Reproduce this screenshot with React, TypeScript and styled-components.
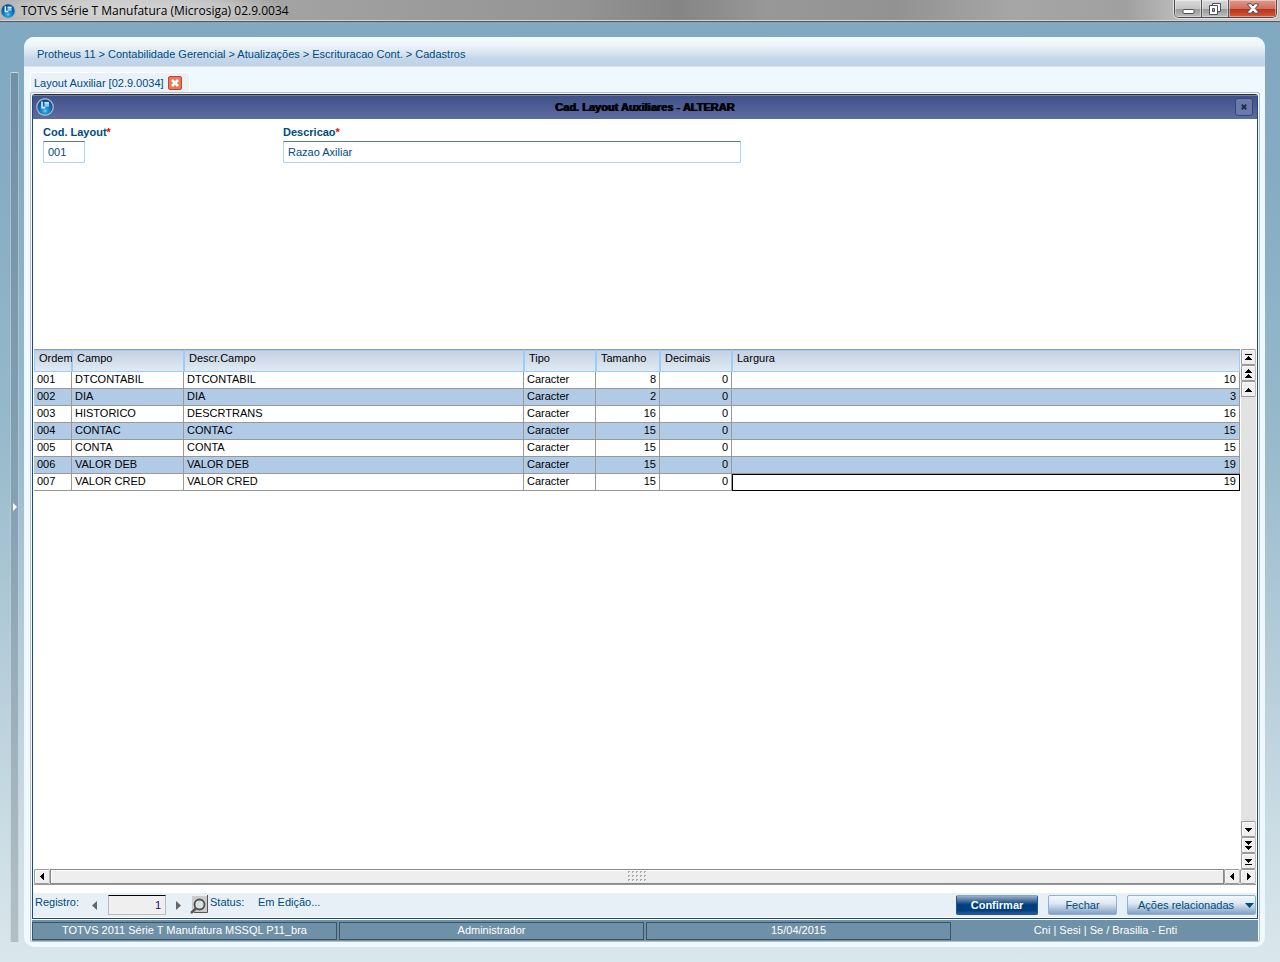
import React from "react";
import styled, { createGlobalStyle, css } from "styled-components";

const GlobalStyle = createGlobalStyle`
  *, *::before, *::after { box-sizing: border-box; }
  body {
    margin: 0;
    font-family: "Liberation Sans", Arial, sans-serif;
    font-size: 11px;
    line-height: 14px;
    color: #004b7f;
  }
  button, input { font: inherit; color: inherit; margin: 0; border-radius: 0; }
  button { padding: 0; cursor: pointer; }
`;

const Page = styled.div`
  min-height: 100vh;
  display: flex;
  flex-direction: column;
  background: linear-gradient(#80a8c0 0%, #84abc3 16%, #97b9cb 45%, #cfdfe6 90%, #dae7ec 100%);
`;

const AppBar = styled.header`
  display: flex;
  align-items: center;
  height: 22px;
  padding: 0 3px 0 0;
  border-bottom: 1px solid #4b5660;
  box-shadow: inset 0 -1px #d6d6d6;
  background:
    radial-gradient(ellipse 150px 22px at 140px 11px, rgba(255, 255, 255, 0.5), rgba(255, 255, 255, 0.35) 60%, transparent),
    linear-gradient(90deg, #b4b4b4 0%, #a0a0a0 26%, #949494 45%, #858585 53%, #989898 60%, #929292 70%, #a6a6a6 79%, #a0a0a0 88%, #c8c8c8 94%, #c4c4c4 100%);
`;

const AppTitle = styled.h1`
  flex: 1;
  margin: 0 0 0 5px;
  font: 400 12px/20px "Open Sans", sans-serif;
  color: #000;
`;

const WindowControls = styled.div`
  display: flex;
  align-self: flex-start;
  height: 18px;
  border: 1px solid #4a4a52;
  border-top: 0;
  border-radius: 0 0 5px 5px;
  box-shadow: 0 0 0 1px #e2e2e2;
  overflow: hidden;
`;

const WindowButton = styled.button<{ $close?: boolean }>`
  display: flex;
  align-items: center;
  justify-content: center;
  width: ${(p) => (p.$close ? 47 : 27)}px;
  border: 0;
  border-right: ${(p) => (p.$close ? "0" : "1px solid #55555c")};
  box-shadow: inset 0 0 0 1px rgba(255, 255, 255, 0.4);
  background: ${(p) =>
    p.$close
      ? "linear-gradient(#dd9d90 0%, #cf6f5c 50%, #b52f17 51%, #d65a38 100%)"
      : "linear-gradient(#dadada 0%, #c4c4c4 50%, #989898 51%, #bcbcbc 100%)"};
`;

const Workspace = styled.div`
  flex: 1;
  display: flex;
  gap: 5px;
  padding: 15px 15px 15px 10px;
`;

const Rail = styled.button`
  width: 9px;
  margin: 35px 0 5px;
  border: 1px solid rgba(255, 255, 255, 0.4);
  border-radius: 2px;
  background: linear-gradient(#6f91a8, #85a2b3 50%, #b3bfc6);
  color: #fff;
  display: flex;
  align-items: center;
  justify-content: center;
`;

const Panel = styled.main`
  flex: 1;
  min-width: 0;
  display: flex;
  flex-direction: column;
  border-radius: 10px;
  overflow: hidden;
  background: #eff7ff;
`;

const Breadcrumb = styled.nav`
  height: 30px;
  padding: 10px 13px 0;
  border-bottom: 1px solid #d5e2ef;
  background: linear-gradient(#f4f9fc 0%, #eef5f9 30%, #c4d6e8 75%, #c0d3e7 100%);
`;

const TabStrip = styled.div`
  display: flex;
  padding: 5px 5px 0 6px;
`;

const Tab = styled.div`
  display: flex;
  align-items: center;
  gap: 4px;
  height: 20px;
  padding: 0 7px 0 3px;
  border: 1px solid #fff;
  border-bottom: 0;
  border-radius: 3px 3px 0 0;
  background: #eaf1f7;
`;

const TabClose = styled.button`
  display: flex;
  align-items: center;
  justify-content: center;
  width: 14px;
  height: 14px;
  border: 1px solid #d63c23;
  border-radius: 2px;
  background: #d9805e;
`;

const Frame = styled.div`
  flex: 1;
  display: flex;
  flex-direction: column;
  margin: 0 5px 5px 6px;
  padding: 1px 1px 0;
  border: 1px solid #b9bec3;
  border-radius: 2px;
`;

const Dialog = styled.section`
  flex: 1;
  display: flex;
  flex-direction: column;
  border: 1px solid #1a4b7c;
  border-top-color: #2c2c36;
  border-radius: 3px 3px 0 0;
  background: #fff;
`;

const DialogBar = styled.div`
  display: flex;
  align-items: center;
  justify-content: space-between;
  height: 24px;
  padding: 0 4px 2px 3px;
  border-top: 1px solid #71809d;
  background: linear-gradient(#40508a, #5d6ca0);
`;

const DialogTitle = styled.h2`
  margin: 0;
  font-size: 11px;
  line-height: 20px;
  color: #000;
  text-shadow: 1px 0 #000;
`;

const DialogClose = styled.button`
  display: flex;
  align-items: center;
  justify-content: center;
  width: 18px;
  height: 18px;
  border: 1px solid #34467c;
  border-radius: 3px;
  background: #6a7aaa;
`;

const Form = styled.form`
  display: flex;
  min-height: 230px;
  padding: 6px 10px 0;
`;

const Field = styled.div<{ $wide?: boolean }>`
  display: flex;
  flex-direction: column;
  gap: 2px;
  width: ${(p) => (p.$wide ? 458 : 240)}px;
`;

const FieldLabel = styled.label`
  font-weight: 700;
`;

const Required = styled.span`
  color: #f00;
`;

const TextBox = styled.input<{ $short?: boolean }>`
  width: ${(p) => (p.$short ? "42px" : "100%")};
  height: 22px;
  padding: 0 4px;
  border: 1px solid #aed6fb;
  border-top-color: #5a7aa0;
  background: #fff;
`;

const GridArea = styled.div`
  flex: 1;
  display: flex;
  gap: 1px;
  padding: 0 1px;
`;

const TableHolder = styled.div`
  flex: 1;
`;

const Table = styled.table`
  width: 100%;
  table-layout: fixed;
  border-collapse: separate;
  border-spacing: 0;
  color: #000;
`;

const HeadCell = styled.th`
  height: 23px;
  padding: 1px 0 0 4px;
  overflow: hidden;
  white-space: nowrap;
  vertical-align: top;
  text-align: left;
  font-weight: 400;
  border-top: 1px solid #999;
  border-bottom: 1px solid #9cf;
  border-left: 1px solid #9cf;
  box-shadow: inset 0 1px #9cf, inset -1px 0 #9cf;
  background: linear-gradient(#c4d0df, #e1eaf5);
`;

const Row = styled.tr`
  background: #fff;
  &:nth-child(even) { background: #b1cbe7; }
`;

const Cell = styled.td<{ $number?: boolean; $active?: boolean }>`
  height: 17px;
  padding: 0 3px 2px;
  border-right: 1px solid #999;
  border-bottom: 1px solid #999;
  text-align: ${(p) => (p.$number ? "right" : "left")};
  ${(p) =>
    p.$active &&
    css`
      border-right-color: #000;
      border-bottom-color: #000;
      box-shadow: inset 1px 1px #000;
    `}
`;

const VScroll = styled.div`
  display: flex;
  flex-direction: column;
  width: 15px;
  background: #e2e2e2;
`;

const ScrollGap = styled.div`
  flex: 1;
`;

const ScrollButton = styled.button`
  display: flex;
  align-items: center;
  justify-content: center;
  width: 100%;
  height: 16px;
  border: 1px solid #999;
  border-right-color: #bbb;
  border-radius: 2px;
  box-shadow: inset 1px 1px #fff;
  background: #eee;
  color: #000;
  svg { flex: none; }
`;

const HScroll = styled.div`
  display: flex;
  height: 16px;
  margin: 0 1px;
  border-bottom: 1px solid #999;
  ${ScrollButton} { width: 16px; height: 15px; }
`;

const ScrollThumb = styled.div`
  flex: 1;
  display: flex;
  align-items: center;
  justify-content: center;
  border: 1px solid #888;
  box-shadow: inset 1px 1px #fff;
  background: #eee;
`;

const Footer = styled.footer`
  display: flex;
  justify-content: space-between;
  height: 25px;
  margin-top: 8px;
  padding: 2px 1px 0 2px;
  border-bottom: 1px solid #fff;
  background: #e8f0f7;
`;

const RecordNav = styled.div`
  display: flex;
  align-items: flex-start;
`;

const FooterText = styled.span<{ $width?: number }>`
  width: ${(p) => (p.$width ? `${p.$width}px` : "auto")};
`;

const StepButton = styled.button`
  display: flex;
  align-items: center;
  justify-content: center;
  width: 17px;
  height: 20px;
  border: 0;
  background: none;
  color: #666;
`;

const RecordInput = styled.input`
  width: 58px;
  height: 20px;
  margin: 0 4px 0 5px;
  padding: 0 4px;
  border: 1px solid #bbb;
  border-top-color: #000;
  background: #efefef;
  color: #1a1060;
  text-align: right;
`;

const SearchButton = styled.button`
  width: 18px;
  height: 19px;
  margin: 0 2px 0 3px;
  border: 0;
  background: none;
`;

const Actions = styled.div`
  display: flex;
  gap: 10px;
`;

const ActionButton = styled.button<{ $primary?: boolean; $menu?: boolean; $width: number }>`
  display: flex;
  align-items: center;
  justify-content: ${(p) => (p.$menu ? "space-between" : "center")};
  width: ${(p) => p.$width}px;
  height: 20px;
  padding: ${(p) => (p.$menu ? "0 1px 0 10px" : "0")};
  border: 1px solid #8fafd3;
  border-radius: 2px;
  background: linear-gradient(#f2f8fe 0%, #dfe9f4 40%, #7f9fc4 100%);
  white-space: nowrap;
  ${(p) =>
    p.$primary &&
    css`
      border-color: #8aa3c2 #24548c #24548c;
      background: linear-gradient(#9db0c7 0%, #003f7f 48%, #003f7f 80%, #2a5e96 100%);
      color: #fff;
      font-weight: 700;
    `}
`;

const StatusBar = styled.div`
  display: grid;
  grid-template-columns: repeat(4, 1fr);
  gap: 2px;
  padding: 2px 0 1px;
  border-top: 1px solid #fff;
  background: #6f91a8;
  color: #fff;
`;

const StatusCell = styled.div<{ $plain?: boolean }>`
  height: 18px;
  border: 1px solid ${(p) => (p.$plain ? "transparent" : "#3d5363")};
  line-height: 14px;
  text-align: center;
`;

function Logo({ size }: { size: number }) {
  return (
    <svg width={size} height={size} viewBox="0 0 18 18" aria-hidden="true">
      <defs>
        <radialGradient id={`orb${size}`} cx="50%" cy="75%" r="75%">
          <stop offset="0" stopColor="#49b4e8" />
          <stop offset="0.5" stopColor="#0d72b8" />
          <stop offset="1" stopColor="#0a4884" />
        </radialGradient>
      </defs>
      <circle cx="9" cy="9" r="8.9" fill="#a9b4c0" />
      <circle cx="9" cy="9" r="7.6" fill={`url(#orb${size})`} />
      <path d="M5.2 3.600h1.600v5.200h2.400v1.600H5.200z" fill="#d8effc" />
      <path d="M8.600 4.200h4.400v4.600H8.600z" fill="#8cc9ee" />
      <path d="M8.600 4.200h4.400v1.200H8.600z" fill="#e4f4ff" />
      <path d="M7.500 12.600h3l-1.500 1.600z" fill="#8fd6f7" />
    </svg>
  );
}

function Cross({ size, color, width }: { size: number; color: string; width: number }) {
  return (
    <svg width={size} height={size} viewBox="0 0 8 8" aria-hidden="true">
      <path d="M1 1l6 6M7 1l-6 6" stroke={color} strokeWidth={width} />
    </svg>
  );
}

const glyphs = {
  first: "M4 3h7v1H4zM7 5h1v1h1v1h1v1h1v1H4V8h1V7h1V6h1z",
  pageUp: "M7 2h1v1h1v1h1v1h1v1H4V5h1V4h1V3h1zM7 7h1v1h1v1h1v1h1v1H4v-1h1V9h1V8h1z",
  up: "M7 5h1v1h1v1h1v1h1v1H4V8h1V7h1V6h1z",
  down: "M4 5h7v1h-1v1H9v1H8v1H7V8H6V7H5V6H4z",
  pageDown: "M4 2h7v1h-1v1H9v1H8v1H7V5H6V4H5V3H4zM4 7h7v1h-1v1H9v1H8v1H7v-1H6V9H5V8H4z",
  last: "M4 4h7v1h-1v1H9v1H8v1H7V7H6V6H5V5H4zM4 9h7v1H4z",
  left: "M9 3v7H8V9H7V8H6V7H5V6h1V5h1V4h1V3z",
  right: "M6 3v7h1V9h1V8h1V7h1V6H9V5H8V4H7V3z",
};

function Glyph({ name }: { name: keyof typeof glyphs }) {
  return (
    <svg width="15" height="13" viewBox="0 0 15 13" aria-hidden="true">
      <path d={glyphs[name]} fill="currentColor" shapeRendering="crispEdges" />
    </svg>
  );
}

function Arrow({ back }: { back?: boolean }) {
  return (
    <svg width="5" height="9" viewBox="0 0 5 9" aria-hidden="true">
      <path d={back ? "M5 0v9L0 4.5z" : "M0 0v9l5-4.5z"} fill="currentColor" />
    </svg>
  );
}

function Magnifier() {
  return (
    <svg width="18" height="19" viewBox="0 0 18 19" aria-hidden="true">
      <path d="M2 .5h15v17H2z" fill="#cbcbcb" />
      <path d="M2 .5h15" stroke="#eee" />
      <path d="M17.5 0v17.500H4" fill="none" stroke="#555" />
      <circle cx="9.500" cy="9.500" r="5" fill="#d8e0e3" stroke="#505050" strokeWidth="1.800" />
      <path d="M6 13.500L1 18" stroke="#555" strokeWidth="2.400" />
    </svg>
  );
}

function Grip() {
  return (
    <svg width="19" height="11" viewBox="0 0 19 11" aria-hidden="true">
      {[0, 4, 8].map((y) =>
        [0, 4, 8, 12, 16].map((x) => (
          <path key={`${x}-${y}`} d={`M${x} ${y}h2v1h-1v1h-1z`} fill="#aaa" shapeRendering="crispEdges" />
        ))
      )}
    </svg>
  );
}

const columns = [
  { label: "Ordem", width: 38 },
  { label: "Campo", width: 112 },
  { label: "Descr.Campo", width: 340 },
  { label: "Tipo", width: 72 },
  { label: "Tamanho", width: 64 },
  { label: "Decimais", width: 72 },
  { label: "Largura" },
];

const rows = [
  ["001", "DTCONTABIL", "DTCONTABIL", "Caracter", "8", "0", "10"],
  ["002", "DIA", "DIA", "Caracter", "2", "0", "3"],
  ["003", "HISTORICO", "DESCRTRANS", "Caracter", "16", "0", "16"],
  ["004", "CONTAC", "CONTAC", "Caracter", "15", "0", "15"],
  ["005", "CONTA", "CONTA", "Caracter", "15", "0", "15"],
  ["006", "VALOR DEB", "VALOR DEB", "Caracter", "15", "0", "19"],
  ["007", "VALOR CRED", "VALOR CRED", "Caracter", "15", "0", "19"],
];

export default function App() {
  return (
    <Page>
      <GlobalStyle />
      <AppBar>
        <Logo size={16} />
        <AppTitle>TOTVS Série T Manufatura (Microsiga) 02.9.0034</AppTitle>
        <WindowControls>
          <WindowButton aria-label="Minimizar">
            <svg width="13" height="12" viewBox="0 0 13 12">
              <rect x="1" y="6.500" width="11" height="4" rx="1" fill="#fff" stroke="#50505a" />
            </svg>
          </WindowButton>
          <WindowButton aria-label="Restaurar">
            <svg width="12" height="12" viewBox="0 0 12 12">
              <path d="M3.500.5h8v8h-8z" fill="#fff" stroke="#50505a" />
              <path d="M.5 2.500h8v9h-8z" fill="#fff" stroke="#50505a" />
              <path d="M3.500 5.500h2v3h-2z" fill="#aaa" stroke="#50505a" />
            </svg>
          </WindowButton>
          <WindowButton $close aria-label="Encerrar">
            <svg width="12" height="11" viewBox="0 0 12 11">
              <path
                d="M.8.8h3.400L6 3 7.800.8h3.400v1.200L8.200 5.500l3 3.300v1.400H7.800L6 8l-1.800 2.200H.8V8.800l3-3.300-3-3.500z"
                fill="#fff"
                stroke="#54404a"
              />
            </svg>
          </WindowButton>
        </WindowControls>
      </AppBar>
      <Workspace>
        <Rail aria-label="Abrir menu">
          <svg width="4" height="8" viewBox="0 0 4 8">
            <path d="M0 0l4 4-4 4z" fill="#fff" />
          </svg>
        </Rail>
        <Panel>
          <Breadcrumb>
            Protheus 11 &gt; Contabilidade Gerencial &gt; Atualizações &gt; Escrituracao Cont. &gt; Cadastros
          </Breadcrumb>
          <TabStrip>
            <Tab>
              Layout Auxiliar [02.9.0034]
              <TabClose aria-label="Fechar aba">
                <Cross size={8} color="#fff" width={2.5} />
              </TabClose>
            </Tab>
          </TabStrip>
          <Frame>
            <Dialog>
              <DialogBar>
                <Logo size={18} />
                <DialogTitle>Cad. Layout Auxiliares - ALTERAR</DialogTitle>
                <DialogClose aria-label="Fechar janela">
                  <Cross size={6} color="#222a48" width={2.5} />
                </DialogClose>
              </DialogBar>
              <Form>
                <Field>
                  <FieldLabel htmlFor="codigo">
                    Cod. Layout<Required>*</Required>
                  </FieldLabel>
                  <TextBox id="codigo" $short defaultValue="001" />
                </Field>
                <Field $wide>
                  <FieldLabel htmlFor="descricao">
                    Descricao<Required>*</Required>
                  </FieldLabel>
                  <TextBox id="descricao" defaultValue="Razao Axiliar" />
                </Field>
              </Form>
              <GridArea>
                <TableHolder>
                  <Table>
                    <colgroup>
                      {columns.map((c) => (
                        <col key={c.label} width={c.width} />
                      ))}
                    </colgroup>
                    <thead>
                      <tr>
                        {columns.map((c) => (
                          <HeadCell key={c.label}>{c.label}</HeadCell>
                        ))}
                      </tr>
                    </thead>
                    <tbody>
                      {rows.map((row, r) => (
                        <Row key={row[0]}>
                          {row.map((value, c) => (
                            <Cell key={c} $number={c > 3} $active={r === 6 && c === 6}>
                              {value}
                            </Cell>
                          ))}
                        </Row>
                      ))}
                    </tbody>
                  </Table>
                </TableHolder>
                <VScroll>
                  <ScrollButton aria-label="Primeiro"><Glyph name="first" /></ScrollButton>
                  <ScrollButton aria-label="Página acima"><Glyph name="pageUp" /></ScrollButton>
                  <ScrollButton aria-label="Acima"><Glyph name="up" /></ScrollButton>
                  <ScrollGap />
                  <ScrollButton aria-label="Abaixo"><Glyph name="down" /></ScrollButton>
                  <ScrollButton aria-label="Página abaixo"><Glyph name="pageDown" /></ScrollButton>
                  <ScrollButton aria-label="Último"><Glyph name="last" /></ScrollButton>
                </VScroll>
              </GridArea>
              <HScroll>
                <ScrollButton aria-label="Esquerda"><Glyph name="left" /></ScrollButton>
                <ScrollThumb><Grip /></ScrollThumb>
                <ScrollButton aria-label="Rolar à esquerda"><Glyph name="left" /></ScrollButton>
                <ScrollButton aria-label="Rolar à direita"><Glyph name="right" /></ScrollButton>
              </HScroll>
              <Footer>
                <RecordNav>
                  <FooterText as="label" htmlFor="registro" $width={51}>Registro:</FooterText>
                  <StepButton aria-label="Anterior"><Arrow back /></StepButton>
                  <RecordInput id="registro" defaultValue="1" />
                  <StepButton aria-label="Próximo"><Arrow /></StepButton>
                  <SearchButton aria-label="Pesquisar"><Magnifier /></SearchButton>
                  <FooterText $width={48}>Status:</FooterText>
                  <FooterText>Em Edição...</FooterText>
                </RecordNav>
                <Actions>
                  <ActionButton $primary $width={82}>Confirmar</ActionButton>
                  <ActionButton $width={69}>Fechar</ActionButton>
                  <ActionButton $menu $width={129}>
                    Ações relacionadas
                    <svg width="9" height="5" viewBox="0 0 9 5" aria-hidden="true">
                      <path d="M0 0h9L4.500 5z" fill="#004b7f" />
                    </svg>
                  </ActionButton>
                </Actions>
              </Footer>
            </Dialog>
            <StatusBar>
              <StatusCell>TOTVS 2011 Série T Manufatura MSSQL P11_bra</StatusCell>
              <StatusCell>Administrador</StatusCell>
              <StatusCell>15/04/2015</StatusCell>
              <StatusCell $plain>Cni | Sesi | Se / Brasilia - Enti</StatusCell>
            </StatusBar>
          </Frame>
        </Panel>
      </Workspace>
    </Page>
  );
}
